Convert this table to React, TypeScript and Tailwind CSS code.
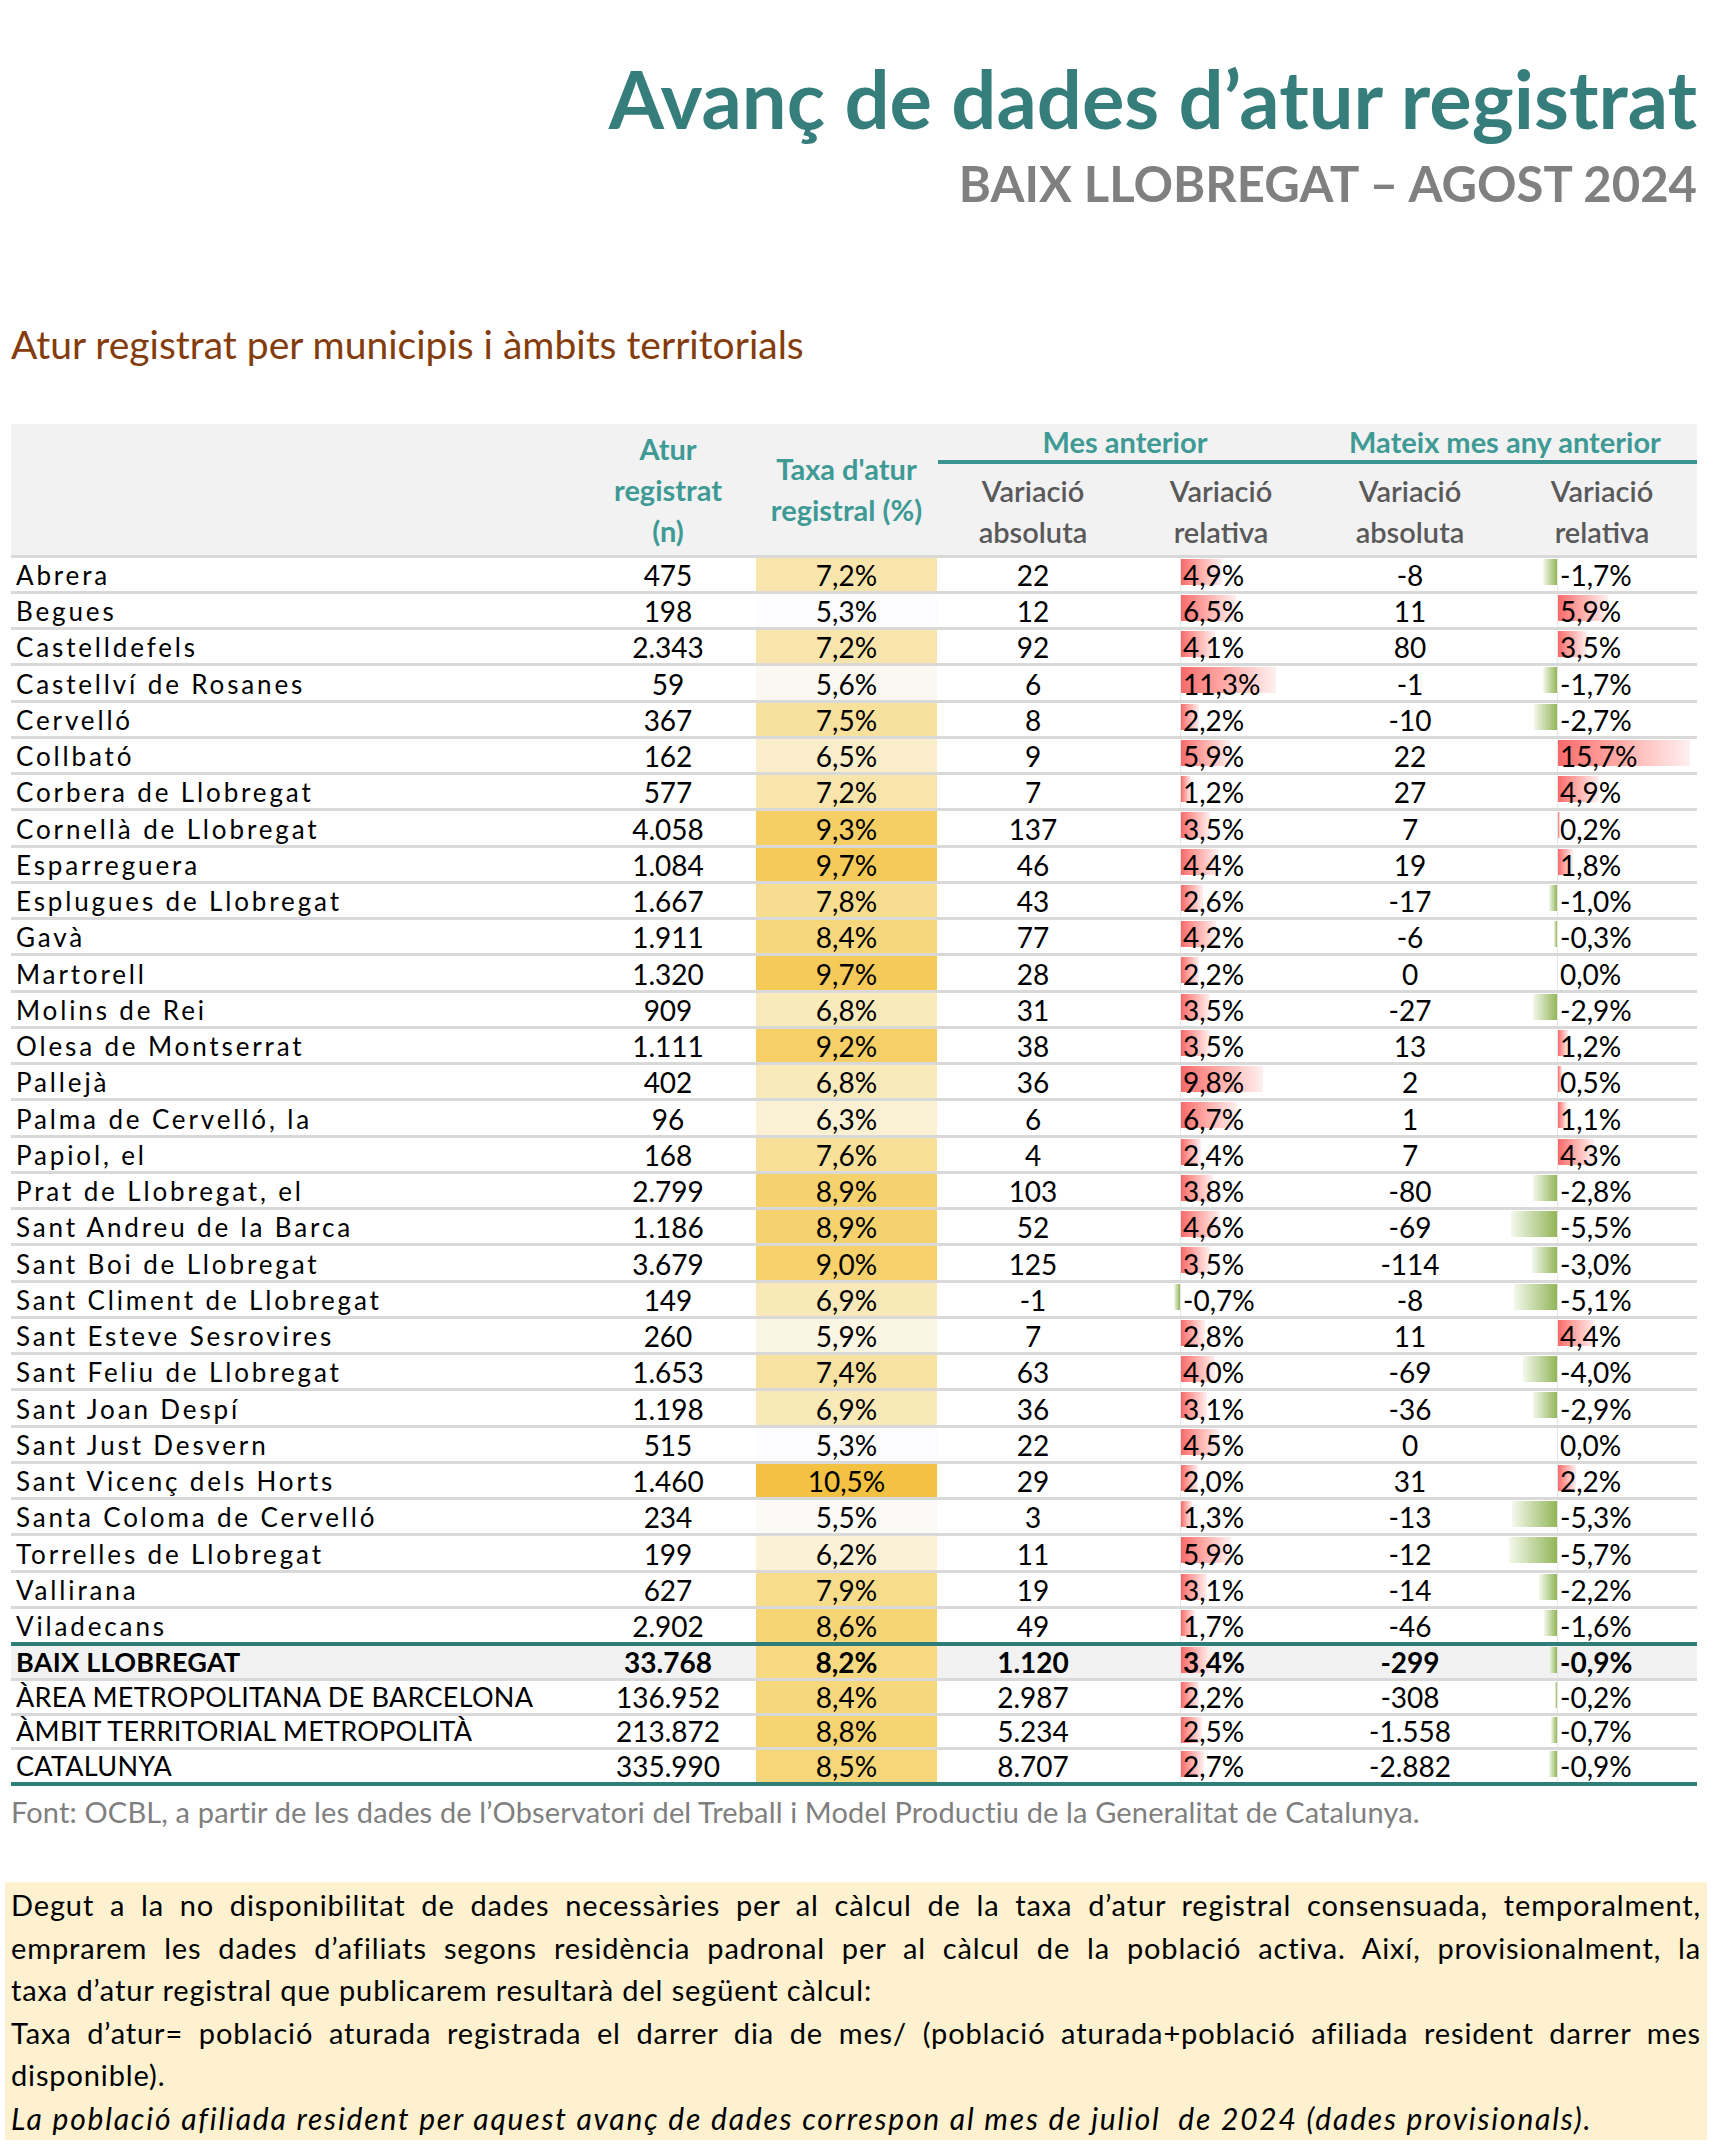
type Row = [string, string, number, string, number, string, number];

const rows: Row[] = [
  ["Abrera", "475", 7.2, "22", 4.9, "-8", -1.7],
  ["Begues", "198", 5.3, "12", 6.5, "11", 5.9],
  ["Castelldefels", "2.343", 7.2, "92", 4.1, "80", 3.5],
  ["Castellví de Rosanes", "59", 5.6, "6", 11.3, "-1", -1.7],
  ["Cervelló", "367", 7.5, "8", 2.2, "-10", -2.7],
  ["Collbató", "162", 6.5, "9", 5.9, "22", 15.7],
  ["Corbera de Llobregat", "577", 7.2, "7", 1.2, "27", 4.9],
  ["Cornellà de Llobregat", "4.058", 9.3, "137", 3.5, "7", 0.2],
  ["Esparreguera", "1.084", 9.7, "46", 4.4, "19", 1.8],
  ["Esplugues de Llobregat", "1.667", 7.8, "43", 2.6, "-17", -1.0],
  ["Gavà", "1.911", 8.4, "77", 4.2, "-6", -0.3],
  ["Martorell", "1.320", 9.7, "28", 2.2, "0", 0.0],
  ["Molins de Rei", "909", 6.8, "31", 3.5, "-27", -2.9],
  ["Olesa de Montserrat", "1.111", 9.2, "38", 3.5, "13", 1.2],
  ["Pallejà", "402", 6.8, "36", 9.8, "2", 0.5],
  ["Palma de Cervelló, la", "96", 6.3, "6", 6.7, "1", 1.1],
  ["Papiol, el", "168", 7.6, "4", 2.4, "7", 4.3],
  ["Prat de Llobregat, el", "2.799", 8.9, "103", 3.8, "-80", -2.8],
  ["Sant Andreu de la Barca", "1.186", 8.9, "52", 4.6, "-69", -5.5],
  ["Sant Boi de Llobregat", "3.679", 9.0, "125", 3.5, "-114", -3.0],
  ["Sant Climent de Llobregat", "149", 6.9, "-1", -0.7, "-8", -5.1],
  ["Sant Esteve Sesrovires", "260", 5.9, "7", 2.8, "11", 4.4],
  ["Sant Feliu de Llobregat", "1.653", 7.4, "63", 4.0, "-69", -4.0],
  ["Sant Joan Despí", "1.198", 6.9, "36", 3.1, "-36", -2.9],
  ["Sant Just Desvern", "515", 5.3, "22", 4.5, "0", 0.0],
  ["Sant Vicenç dels Horts", "1.460", 10.5, "29", 2.0, "31", 2.2],
  ["Santa Coloma de Cervelló", "234", 5.5, "3", 1.3, "-13", -5.3],
  ["Torrelles de Llobregat", "199", 6.2, "11", 5.9, "-12", -5.7],
  ["Vallirana", "627", 7.9, "19", 3.1, "-14", -2.2],
  ["Viladecans", "2.902", 8.6, "49", 1.7, "-46", -1.6],
];

const totals: Row[] = [
  ["BAIX LLOBREGAT", "33.768", 8.2, "1.120", 3.4, "-299", -0.9],
  ["ÀREA METROPOLITANA DE BARCELONA", "136.952", 8.4, "2.987", 2.2, "-308", -0.2],
  ["ÀMBIT TERRITORIAL METROPOLITÀ", "213.872", 8.8, "5.234", 2.5, "-1.558", -0.7],
  ["CATALUNYA", "335.990", 8.5, "8.707", 2.7, "-2.882", -0.9],
];

const BAR = 8.4;

const pct = (v: number) => v.toFixed(1).replace(".", ",") + "%";

// colour scale of the "taxa" column: white -> light yellow -> amber
function taxaColor(v: number) {
  const lo = [252, 252, 255];
  const mid = [247, 219, 135];
  const hi = [244, 194, 67];
  let a = lo, b = mid, t = (v - 5.3) / 2.7;
  if (v > 8) {
    a = mid;
    b = hi;
    t = (v - 8) / 2.5;
  }
  t = Math.max(0, Math.min(1, t));
  const c = a.map((x, i) => Math.round(x + (b[i] - x) * t));
  return `rgb(${c[0]},${c[1]},${c[2]})`;
}

const cols = "grid grid-cols-[569px_176px_181px_192px_184px_194px_190px]";

function RelCell({ v, negW }: { v: number; negW: string }) {
  return (
    <div className="flex h-full">
      <div className={`relative h-full ${negW}`}>
        {v < 0 && (
          <div
            className="absolute right-0 top-[1px] h-[26px] bg-linear-to-l from-[#93b656] to-[#f4f8ec]"
            style={{ width: -v * BAR }}
          />
        )}
      </div>
      <div className="relative flex h-full flex-1 items-end border-l border-[#e6e6e6] pb-[2px]">
        {v > 0 && (
          <div
            className="absolute left-0 top-[1px] h-[26px] bg-linear-to-r from-[#f8696b] to-[#fdf0f0]"
            style={{ width: v * BAR }}
          />
        )}
        <span className="relative pl-[2px]">{pct(v)}</span>
      </div>
    </div>
  );
}

function DataRow({ r, total, bold, last }: { r: Row; total?: boolean; bold?: boolean; last?: boolean }) {
  const h = total ? "h-[31.75px]" : "h-[33.25px]";
  return (
    <div
      className={`${cols} ${h} box-content text-[28px] leading-none ${
        last ? "border-b-4 border-[#2f7d79]" : "border-b-[3px] border-[#d9d9d9]"
      } ${bold ? "bg-[#f2f2f2] font-bold" : ""}`}
    >
      <div
        className={`flex items-end pb-[3px] pl-[5px] ${
          total ? "text-[27px] tracking-[0.01em]" : "text-[26px] tracking-[0.11em]"
        }`}
      >
        {r[0]}
      </div>
      <div className="flex items-end justify-center pb-[2px]">{r[1]}</div>
      <div
        className="flex items-end justify-center pb-[2px]"
        style={{ backgroundColor: taxaColor(r[2]) }}
      >
        {pct(r[2])}
      </div>
      <div className="flex items-end justify-center pb-[2px]">{r[3]}</div>
      <RelCell v={r[4]} negW="w-[51px]" />
      <div className="flex items-end justify-center pb-[2px]">{r[5]}</div>
      <RelCell v={r[6]} negW="w-[50px]" />
    </div>
  );
}

export default function App() {
  return (
    <div className="h-[2151px] w-[1712px] bg-white font-['Lato',sans-serif] text-black">
      <div className="pr-[15px] pt-[59px] text-right">
        <h1 className="text-[79.5px] font-bold leading-none text-[#367e7b]">
          Avanç de dades d’atur registrat
        </h1>
        <h2 className="mt-[20px] text-[49px] font-bold leading-none text-[#808080]">
          BAIX LLOBREGAT – AGOST 2024
        </h2>
      </div>

      <h3 className="mt-[117px] pl-[11px] text-[39px] font-normal leading-none text-[#843c0c]">
        Atur registrat per municipis i àmbits territorials
      </h3>

      <div className="ml-[11px] mt-[60px] w-[1686px]">
        {/* header */}
        <div className={`${cols} h-[131px] box-content border-b-[3px] border-[#d9d9d9] bg-[#f2f2f2] text-[29px] leading-[41px]`}>
          <div />
          <div className="flex flex-col items-center justify-center font-bold text-[#3f9a95]">
            <span>Atur</span>
            <span>registrat</span>
            <span>(n)</span>
          </div>
          <div className="flex flex-col items-center justify-center font-bold text-[#3f9a95]">
            <span>Taxa d'atur</span>
            <span>registral (%)</span>
          </div>
          <div className="col-span-4 flex flex-col">
            <div className="grid h-[36px] grid-cols-[376px_384px] items-end font-bold text-[#3f9a95]">
              <div className="text-center leading-[36px]">Mes anterior</div>
              <div className="text-center leading-[36px]">Mateix mes any anterior</div>
            </div>
            <div className="ml-[1px] h-[4px] bg-[#3a9490]" />
            <div className="grid flex-1 grid-cols-[192px_184px_194px_190px] pt-[6px] font-semibold text-[#595959]">
              <div className="flex flex-col items-center">
                <span>Variació</span>
                <span>absoluta</span>
              </div>
              <div className="flex flex-col items-center">
                <span>Variació</span>
                <span>relativa</span>
              </div>
              <div className="flex flex-col items-center">
                <span>Variació</span>
                <span>absoluta</span>
              </div>
              <div className="flex flex-col items-center">
                <span>Variació</span>
                <span>relativa</span>
              </div>
            </div>
          </div>
        </div>

        {rows.map((r, i) => (
          <DataRow key={r[0]} r={r} last={i === rows.length - 1} />
        ))}
        {totals.map((r, i) => (
          <DataRow key={r[0]} r={r} total bold={i === 0} last={i === totals.length - 1} />
        ))}
      </div>

      <p className="mt-[8px] pl-[11px] text-[29px] leading-[36px] tracking-[0.005em] text-[#7f7f7f]">
        Font: OCBL, a partir de les dades de l’Observatori del Treball i Model Productiu de la Generalitat de Catalunya.
      </p>

      <div className="mx-[5px] mt-[52px] bg-[#fdf1d0] px-[6px] pt-[2px] text-[29px] leading-[42.6px] tracking-[0.03em] text-black">
        <p className="text-justify [text-align-last:justify]">
          Degut a la no disponibilitat de dades necessàries per al càlcul de la taxa d’atur registral consensuada, temporalment,
        </p>
        <p className="text-justify [text-align-last:justify]">
          emprarem les dades d’afiliats segons residència padronal per al càlcul de la població activa. Així, provisionalment, la
        </p>
        <p>taxa d’atur registral que publicarem resultarà del següent càlcul:</p>
        <p className="text-justify [text-align-last:justify]">
          Taxa d’atur= població aturada registrada el darrer dia de mes/ (població aturada+població afiliada resident darrer mes
        </p>
        <p>disponible).</p>
        <p className="text-[30px] italic tracking-[0.06em]">
          La població afiliada resident per aquest avanç de dades correspon al mes de juliol&nbsp; de 2024 (dades provisionals).
        </p>
      </div>
    </div>
  );
}
